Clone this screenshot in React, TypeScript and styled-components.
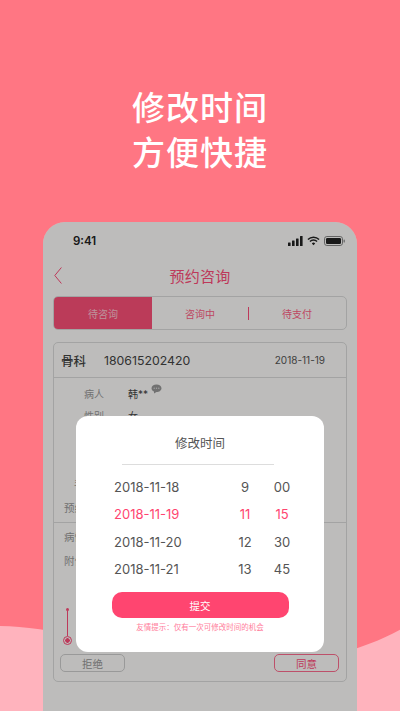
import styled, { createGlobalStyle } from "styled-components";

const dates = ["2018-11-18", "2018-11-19", "2018-11-20", "2018-11-21"];
const hours = ["9", "11", "12", "13"];
const minutes = ["00", "15", "30", "45"];
const activeRow = 1;

export default function App() {
  return (
    <Page>
      <GlobalStyle />
      <Wave viewBox="0 0 400 90" preserveAspectRatio="none">
        <path d="M0 2 C50 3 110 20 200 36 C280 50 350 34 400 6 L400 90 L0 90 Z" fill="#ffb3bd" />
      </Wave>
      <Hero>
        <div>修改时间</div>
        <div>方便快捷</div>
      </Hero>
      <Phone>
        <StatusBar>
          <Time>9:41</Time>
          <StatusIcons>
            <svg width="15" height="10" viewBox="0 0 15 10">
              <rect x="0" y="6.5" width="2.6" height="3.5" rx=".5" fill="#222" />
              <rect x="4" y="4.6" width="2.6" height="5.4" rx=".5" fill="#222" />
              <rect x="8" y="2.4" width="2.6" height="7.6" rx=".5" fill="#222" />
              <rect x="12" y="0" width="2.6" height="10" rx=".5" fill="#222" />
            </svg>
            <svg width="13" height="10" viewBox="0 0 14 10">
              <path d="M1 3.4 A8.5 8.5 0 0 1 13 3.4" fill="none" stroke="#222" strokeWidth="1.6" />
              <path d="M3.2 5.6 A5.4 5.4 0 0 1 10.8 5.6" fill="none" stroke="#222" strokeWidth="1.6" />
              <path d="M5.2 7.6 A2.6 2.6 0 0 1 8.8 7.6 L7 9.6 Z" fill="#222" />
            </svg>
            <svg width="21" height="10" viewBox="0 0 21 10">
              <rect x=".5" y=".5" width="18" height="9" rx="2.4" fill="none" stroke="#888" />
              <rect x="2" y="2" width="15" height="6" rx="1.2" fill="#222" />
              <rect x="19.6" y="3.4" width="1.2" height="3.2" rx=".6" fill="#888" />
            </svg>
          </StatusIcons>
        </StatusBar>
        <NavBar>
          <BackIcon width="8" height="17" viewBox="0 0 8 17">
            <path d="M7.400 0.500 L0.800 8.500 L7.400 16.500" fill="none" stroke="#ff4d7a" strokeWidth="1" />
          </BackIcon>
          <NavTitle>预约咨询</NavTitle>
        </NavBar>
        <Tabs>
          <Tab $active>待咨询</Tab>
          <Tab>咨询中</Tab>
          <Tab $divided>待支付</Tab>
        </Tabs>
        <Card>
          <CardHead>
            <Dept>骨科</Dept>
            <OrderNo>180615202420</OrderNo>
            <OrderDate>2018-11-19</OrderDate>
          </CardHead>
          <InfoList>
            <InfoRow>
              <InfoLabel>病人</InfoLabel>
              <InfoValue>韩**</InfoValue>
              <svg width="11" height="10" viewBox="0 0 11 10">
                <path d="M5.5 0.5C8.3 0.5 10.5 2.2 10.5 4.2S8.3 8 5.5 8L3 9.6V7.5C1.500 6.9 0.5 5.700 0.5 4.200 0.500 2.200 2.700 0.500 5.500 0.500Z" fill="#999" />
                <circle cx="3.2" cy="4.200" r=".7" fill="#ddd" />
                <circle cx="5.500" cy="4.200" r=".7" fill="#ddd" />
                <circle cx="7.800" cy="4.200" r=".7" fill="#ddd" />
              </svg>
            </InfoRow>
            <InfoRow>
              <InfoLabel>性别</InfoLabel>
              <InfoValue>女</InfoValue>
            </InfoRow>
          </InfoList>
          <HiddenLabel>手机</HiddenLabel>
          <BookingRow>预约时间</BookingRow>
          <DetailList>
            <DetailRow>病情描述</DetailRow>
            <DetailRow>附件</DetailRow>
          </DetailList>
          <Timeline>
            <TimelineDot />
            <TimelineLine />
            <TimelineRing />
          </Timeline>
          <Actions>
            <ActionButton>拒绝</ActionButton>
            <ActionButton $accent>同意</ActionButton>
          </Actions>
        </Card>
        <Overlay />
      </Phone>
      <Modal>
        <ModalTitle>修改时间</ModalTitle>
        <ModalRule />
        <Picker>
          {dates.map((date, i) => (
            <PickerRow key={date} $active={i === activeRow}>
              <DateCell>{date}</DateCell>
              <HourCell>{hours[i]}</HourCell>
              <MinuteCell>{minutes[i]}</MinuteCell>
            </PickerRow>
          ))}
        </Picker>
        <Submit>提交</Submit>
        <Tip>友情提示：仅有一次可修改时间的机会</Tip>
      </Modal>
    </Page>
  );
}

const GlobalStyle = createGlobalStyle`
  html, body {
    margin: 0;
    padding: 0;
  }
  body {
    font-family: "Inter", "Noto Sans CJK SC", sans-serif;
  }
`;

const Page = styled.div`
  position: relative;
  width: 400px;
  height: 711px;
  overflow: hidden;
  background: #ff7683;
  display: flex;
  flex-direction: column;
  align-items: center;
`;
const Wave = styled.svg`
  position: absolute;
  left: 0;
  bottom: 0;
  width: 400px;
  height: 87px;
`;
const Hero = styled.div`
  position: relative;
  margin-top: 86px;
  color: #fff;
  font-size: 33px;
  line-height: 45px;
  font-weight: 500;
  letter-spacing: 1px;
  text-align: center;
`;
const Phone = styled.div`
  position: relative;
  margin-top: 46px;
  width: 314px;
  flex: 1;
  box-sizing: border-box;
  padding: 0 10px;
  background: #fffefc;
  border-radius: 22px 22px 0 0;
  overflow: hidden;
`;
const Overlay = styled.div`
  position: absolute;
  inset: 0;
  background: rgba(0, 0, 0, 0.26);
`;
const StatusBar = styled.div`
  height: 37px;
  padding: 0 2px 0 20px;
  display: flex;
  align-items: center;
  justify-content: space-between;
`;
const Time = styled.span`
  font-size: 11.500px;
  font-weight: 600;
  color: #222;
`;
const StatusIcons = styled.div`
  display: flex;
  align-items: center;
  gap: 4px;
`;
const NavBar = styled.div`
  position: relative;
  height: 34px;
  display: flex;
  align-items: center;
  justify-content: center;
`;
const BackIcon = styled.svg`
  position: absolute;
  left: 1px;
  top: 8px;
`;
const NavTitle = styled.div`
  margin-top: -2px;
  font-size: 15px;
  color: #ff4d7a;
  letter-spacing: 0.2px;
`;
const Tabs = styled.div`
  margin-top: 3px;
  height: 34px;
  box-sizing: border-box;
  border: 1px solid #dcdcdc;
  border-radius: 5px;
  display: grid;
  grid-template-columns: 98px 1fr 98px;
  overflow: hidden;
`;
const Tab = styled.div<{ $active?: boolean; $divided?: boolean }>`
  position: relative;
  display: flex;
  align-items: center;
  justify-content: center;
  font-size: 10px;
  color: ${(p) => (p.$active ? "#ffc7d2" : "#ff5f86")};
  background: ${(p) => (p.$active ? "#fd5079" : "transparent")};
  &::before {
    content: "";
    display: ${(p) => (p.$divided ? "block" : "none")};
    position: absolute;
    left: 0;
    top: 10px;
    height: 13px;
    width: 1px;
    background: #ff4d7a;
  }
`;
const Card = styled.div`
  margin-top: 12px;
  height: 340px;
  box-sizing: border-box;
  border: 1px solid #dcdcdc;
  border-radius: 5px;
  display: flex;
  flex-direction: column;
`;
const CardHead = styled.div`
  height: 35px;
  flex: none;
  box-sizing: border-box;
  padding: 0 21px 0 7px;
  display: flex;
  align-items: center;
  border-bottom: 1px solid #dcdcdc;
  color: #444;
`;
const Dept = styled.span`
  font-size: 12.500px;
  font-weight: 500;
  width: 43px;
`;
const OrderNo = styled.span`
  font-size: 12.300px;
`;
const OrderDate = styled.span`
  margin-left: auto;
  font-size: 10px;
  color: #555;
`;
const InfoList = styled.div`
  padding: 4px 0 0 30px;
  display: flex;
  flex-direction: column;
`;
const InfoRow = styled.div`
  height: 22px;
  display: flex;
  align-items: center;
  & > svg {
    margin: -8px 0 0 3px;
  }
`;
const InfoLabel = styled.span`
  width: 44px;
  font-size: 10px;
  color: #999;
`;
const InfoValue = styled.span`
  font-size: 10px;
  color: #444;
`;
const HiddenLabel = styled.div`
  margin: 47px 0 0 20px;
  height: 22px;
  font-size: 10px;
  line-height: 22px;
  color: #999;
`;
const BookingRow = styled.div`
  height: 25px;
  flex: none;
  box-sizing: border-box;
  padding-left: 10px;
  margin-top: 3px;
  font-size: 10.500px;
  line-height: 22px;
  color: #999;
  border-bottom: 1px solid #dcdcdc;
`;
const DetailList = styled.div`
  padding: 3px 0 0 10px;
  display: flex;
  flex-direction: column;
`;
const DetailRow = styled.div`
  height: 24px;
  font-size: 10.500px;
  line-height: 24px;
  color: #999;
`;
const Timeline = styled.div`
  margin: 34px 0 0 9px;
  width: 9px;
  display: flex;
  flex-direction: column;
  align-items: center;
`;
const TimelineDot = styled.div`
  width: 3px;
  height: 3px;
  border-radius: 50%;
  background: #ff4d7a;
`;
const TimelineLine = styled.div`
  width: 1px;
  height: 25px;
  background: #ff4d7a;
`;
const TimelineRing = styled.div`
  width: 7px;
  height: 7px;
  border: 1px solid #ff4d7a;
  border-radius: 50%;
  background: radial-gradient(circle, #ff4d7a 0 2px, transparent 2.500px);
`;
const Actions = styled.div`
  margin-top: auto;
  padding: 0 7px 9px 6px;
  display: flex;
  justify-content: space-between;
`;
const ActionButton = styled.div<{ $accent?: boolean }>`
  width: 65px;
  height: 18px;
  box-sizing: border-box;
  border: 1px solid ${(p) => (p.$accent ? "#ff6d8f" : "#cfcfcf")};
  border-radius: 5px;
  display: flex;
  align-items: center;
  justify-content: center;
  font-size: 10.500px;
  color: ${(p) => (p.$accent ? "#ff4d7a" : "#999")};
`;
const Modal = styled.div`
  position: absolute;
  left: 76px;
  top: 416px;
  width: 248px;
  height: 236px;
  background: #fff;
  border-radius: 12px;
  display: flex;
  flex-direction: column;
  align-items: center;
`;
const ModalTitle = styled.div`
  margin-top: 19px;
  font-size: 12.500px;
  line-height: 18px;
  color: #555;
`;
const ModalRule = styled.div`
  margin: 11px 4px 0 0;
  width: 152px;
  height: 1px;
  background: #ddd;
`;
const Picker = styled.div`
  margin-top: 8px;
  width: 100%;
  display: flex;
  flex-direction: column;
`;
const PickerRow = styled.div<{ $active?: boolean }>`
  height: 27.500px;
  display: grid;
  grid-template-columns: 38px 116px 30px 44px;
  align-items: center;
  font-size: 13px;
  color: ${(p) => (p.$active ? "#ff4570" : "#555")};
`;
const DateCell = styled.span`
  grid-column: 2;
`;
const HourCell = styled.span`
  text-align: center;
  grid-column: 3;
`;
const MinuteCell = styled.span`
  text-align: center;
  grid-column: 4;
`;
const Submit = styled.div`
  margin-top: 9px;
  width: 177px;
  height: 26px;
  border-radius: 10px;
  background: #ff4570;
  color: #fff;
  font-size: 10.500px;
  display: flex;
  align-items: center;
  justify-content: center;
`;
const Tip = styled.div`
  margin-top: 4px;
  font-size: 7.500px;
  line-height: 12px;
  color: #ff7d9b;
`;
